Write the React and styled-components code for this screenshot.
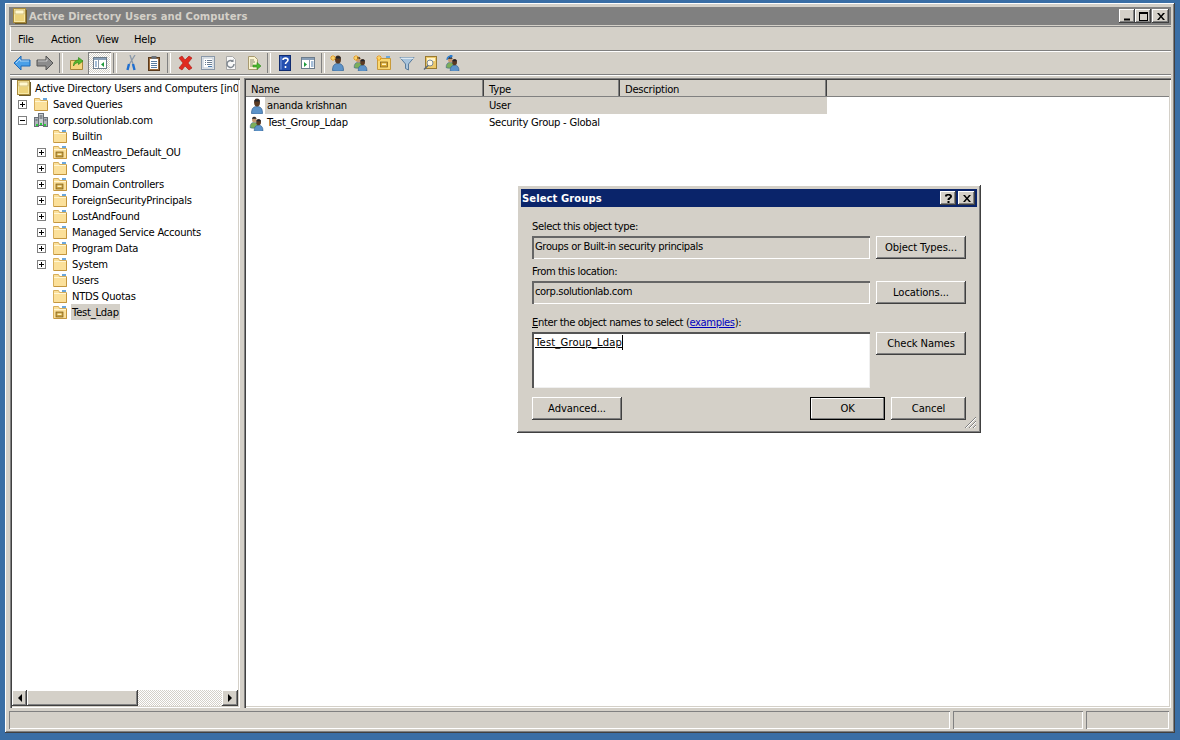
import React from 'react';
import styled, { createGlobalStyle } from 'styled-components';

const Global = createGlobalStyle`
  html, body { margin: 0; padding: 0; width: 1180px; height: 740px; overflow: hidden; background: #3a6ea5; }
  * { box-sizing: border-box; }
  body { font-family: "DejaVu Sans", "Liberation Sans", sans-serif; font-size: 10px; color: #000; letter-spacing: -0.25px; }
`;

const FACE = '#d4d0c8';
const raised = `box-shadow: inset -1px -1px #404040, inset 1px 1px #fff, inset -2px -2px #808080, inset 2px 2px ${FACE};`;
const sunken = `box-shadow: inset 1px 1px #808080, inset 2px 2px #404040, inset -1px -1px #fff, inset -2px -2px ${FACE};`;

const Desktop = styled.div`
  position: relative; width: 1180px; height: 740px; padding: 3px 5px 7px 5px; display: flex;
`;
const AppWindow = styled.div`
  flex: 1; display: flex; flex-direction: column; background: ${FACE};
  padding: 4px 4px 4px 4px; ${raised}
`;
const TitleBar = styled.div`
  height: 18px; flex: none; display: flex; align-items: center; background: #808080;
  padding: 0 2px 0 3px; color: ${FACE}; font-weight: bold;
`;
const TitleText = styled.span`
  margin-left: 1px; flex: 1; font-size: 10px; letter-spacing: 0.08px;
`;
const CaptionBtn = styled.div`
  width: ${p => p.$w || 16}px; height: 14px; background: ${FACE}; ${raised}
  margin-left: ${p => p.$gap || 0}px; display: flex; align-items: center; justify-content: center;
  font-size: 11px;
`;
const MenuBar = styled.div`
  flex: none; height: 25px; margin: 1px 0 0 1px; display: flex; align-items: center; padding: 1px 0 0 7px;
  border-top: 1px solid #808080; border-left: 1px solid #fff; box-shadow: inset 0 -1px #808080;
`;
const MenuItem = styled.span`
  width: ${p => p.$w}px;
`;
const ToolBar = styled.div`
  flex: none; height: 24px; margin-left: 1px; display: flex; align-items: center;
  border-top: 1px solid #fff; border-bottom: 1px solid #808080; box-shadow: 0 1px #fff;
`;
const ToolBtn = styled.div`
  width: 23px; height: 22px; flex: none; display: flex; align-items: center; justify-content: center;
  ${p => p.$on && `background: repeating-conic-gradient(#fff 0 25%, ${FACE} 0 50%) 0 0/2px 2px;
    box-shadow: inset 1px 1px #808080, inset -1px -1px #fff;`}
`;
const ToolSep = styled.div`
  width: ${p => p.$w || 9}px; height: 20px; flex: none; position: relative;
  &::after { content: ''; display: block; width: 2px; height: 20px; margin: 0 auto;
    border-left: 1px solid #808080; border-right: 1px solid #fff; }
`;
const Panes = styled.div`
  flex: 1; min-height: 0; margin: 3px 0 3px 1px; display: flex; gap: 4px;
`;
const TreePane = styled.div`
  width: 230px; flex: none; background: #fff; ${sunken} padding: 2px; display: flex; flex-direction: column;
`;
const TreeScroll = styled.div`
  flex: 1; min-height: 0; overflow: hidden;
`;
const Row = styled.div`
  height: 16px; display: flex; align-items: center; white-space: nowrap; position: relative;
  padding-left: ${p => p.$indent}px;
`;
const Expander = styled.span`
  width: 9px; height: 9px; flex: none; border: 1px solid #808080; background: #fff; position: relative;
  margin-right: 6px;
  &::before { content: ''; position: absolute; left: 1px; top: 3px; width: 5px; height: 1px; background: #000; }
  ${p => p.$plus && `&::after { content: ''; position: absolute; left: 3px; top: 1px; width: 1px; height: 5px; background: #000; }`}
`;
const NoExpander = styled.span`
  width: 15px; flex: none;
`;
const RowLabel = styled.span`
  margin-left: ${p => p.$gap ?? 3}px; padding: 0 1px; line-height: 18px; height: 16px;
  background: ${p => (p.$sel ? FACE : 'transparent')};
`;
const HScroll = styled.div`
  flex: none; height: 16px; display: flex; background: repeating-conic-gradient(#fff 0 25%, ${FACE} 0 50%) 0 0/2px 2px;
`;
const ScrollBtn = styled.div`
  width: ${p => p.$w || 16}px; height: 16px; background: ${FACE}; ${raised} display: flex; align-items: center; justify-content: center;
`;
const Thumb = styled.div`
  width: 111px; height: 16px; background: ${FACE}; ${raised}
`;
const Track = styled.div`
  flex: 1;
`;
const ListPane = styled.div`
  flex: 1; background: #fff; ${sunken} padding: 2px; min-width: 0;
`;
const Header = styled.div`
  height: 16px; background: ${FACE}; display: flex; box-shadow: 0 1px #808080;
`;
const HeadCell = styled.div`
  width: ${p => p.$w}px; flex: none; padding-left: ${p => p.$pad || 5}px; line-height: 16px; padding-top: 1px;
  box-shadow: inset -1px 0 #404040, inset -2px 0 #808080; line-height: 17px;
`;
const ListRow = styled.div`
  height: 17px; width: 581px; display: flex; align-items: center;
  margin-top: ${p => (p.$first ? 1 : 0)}px;
`;
const IconCell = styled.div`
  width: 19px; height: 17px; flex: none; padding-left: 3px; display: flex; align-items: center; background: #fff;
`;
const ListBody = styled.div`
  flex: 1; display: flex; height: 17px; align-items: center; background: ${p => (p.$sel ? FACE : '#fff')};
`;
const ListCell = styled.div`
  width: ${p => p.$w}px; flex: none; padding-left: ${p => p.$pad || 0}px; white-space: nowrap; line-height: 18px;
`;
const StatusBar = styled.div`
  flex: none; height: 18px; display: flex; gap: 3px; padding-right: 2px;
`;
const StatusCell = styled.div`
  width: ${p => p.$w}px; flex: ${p => (p.$grow ? 1 : 'none')}; height: 18px;
  box-shadow: inset 1px 1px #808080, inset -1px -1px #fff;
`;

const Dialog = styled.div`
  position: absolute; left: 517px; top: 185px; width: 464px; height: 248px; background: ${FACE};
  padding: 4px; ${raised} display: flex; flex-direction: column; letter-spacing: -0.38px;
`;
const DlgTitle = styled.div`
  height: 18px; flex: none; background: #0a246a; color: #fff; font-weight: bold; display: flex; align-items: center;
  padding: 0 2px 0 1px;
`;
const DlgTitleText = styled.span`
  flex: 1; font-size: 10px; letter-spacing: 0.08px;
`;
const DlgBody = styled.div`
  flex: 1; display: grid; grid-template-columns: 338px 90px; column-gap: 6px; padding: 11px 11px 0 11px;
  grid-template-rows: 18px 23px 22px 23px 28px 56px 9px 23px; align-content: start;
`;
const Label = styled.label`
  grid-column: 1 / 2; display: block; line-height: 16px; align-self: ${p => p.$align || 'start'};
  margin-bottom: ${p => p.$mb || 0}px;
`;
const Underlined = styled.span`text-decoration: underline;`;
const Link = styled.a`color: #0000c0; text-decoration: underline;`;
const ReadField = styled.div`
  background: ${FACE}; padding: 0 3px; line-height: 22px;
  box-shadow: inset 2px 2px #666, inset -1px -1px #fff; padding-left: 3px;
`;
const NameBox = styled.div`
  background: #fff; padding: 3px 3px; box-shadow: inset 2px 2px #555, inset -1px -1px #f0f0f0;
  display: flex; align-items: flex-start; line-height: 13px;
`;
const Resolved = styled.span`
  text-decoration: underline; padding-top: 1px; border-right: 1px solid #000; height: 15px; letter-spacing: 0.17px;
`;
const Btn = styled.div`
  background: ${FACE}; height: 23px; display: flex; align-items: center; justify-content: center;
  padding-bottom: 1px; letter-spacing: -0.1px; ${raised}
  ${p => p.$def && `box-shadow: inset 0 0 0 1px #000, inset -2px -2px #808080, inset 2px 2px #fff;`}
  width: ${p => p.$w ? p.$w + 'px' : 'auto'};
`;
const BottomRow = styled.div`
  grid-column: 1 / 3; grid-row: 8; display: flex; align-items: center; gap: 6px;
`;
const Spacer = styled.div`flex: 1;`;
const Grip = styled.svg`
  position: absolute; right: 4px; bottom: 4px;
`;

/* icons */
const S = ({ children, w = 16, h = 16 }) => (
  <svg width={w} height={h} viewBox={`0 0 ${w} ${h}`} style={{ flex: 'none', display: 'block' }}>{children}</svg>
);
const Folder = ({ ou }) => (
  <S>
    <path d="M1.500 2.500h5l1 2h7v10h-13z" fill="#fbe09a" stroke="#d6ae5c" />
    <path d="M2 5.500h12" stroke="#fff6d4" />
    <rect x="10" y="2" width="4" height="2" fill="#6aa6dc" />
    <path d="M14.500 5v9.500H2" fill="none" stroke="#c4963e" />
    {ou && <><rect x="4" y="8" width="7" height="5" fill="#c8a040" stroke="#7a5a1a" strokeWidth=".7" /><rect x="5.500" y="9.500" width="4" height="1.500" fill="#fff3c0" /></>}
  </S>
);
const AppIcon = () => (
  <S>
    <rect x="1.500" y="0.500" width="12" height="14" fill="#f6e8a6" stroke="#a88a3a" />
    <rect x="3" y="2" width="9" height="4" fill="#fff8d0" stroke="#b89a4a" strokeWidth=".6" />
    <path d="M14.500 2v13.500H3" stroke="#6a5a2a" fill="none" />
    <rect x="3" y="7" width="9" height="6" fill="#ecd27a" />
  </S>
);
const DomainIcon = () => (
  <S>
    <rect x="5.500" y="1.500" width="5" height="12" fill="#c8ccd0" stroke="#6a7078" />
    <rect x="1.500" y="5.500" width="4" height="9" fill="#aeb4ba" stroke="#6a7078" />
    <rect x="10.500" y="5.500" width="4" height="9" fill="#aeb4ba" stroke="#6a7078" />
    <path d="M6.500 4h3M6.500 6h3M2.500 8h2M11.500 8h2" stroke="#4a5058" />
    <rect x="3" y="12" width="2" height="2" fill="#2ecc40" /><rect x="7" y="11" width="2" height="2" fill="#2ecc40" /><rect x="11" y="12" width="2" height="2" fill="#2ecc40" />
  </S>
);
const Person = ({ x = 0, y = 0, body = '#5d93c8', skin = '#5a3a22', s = 1 }) => (
  <g transform={`translate(${x} ${y}) scale(${s})`}>
    <path d="M1.500 15.500c0-4.500 1.500-7 5.500-7s5.500 2.500 5.500 7c-2 1-9 1-11 0z" fill={body} stroke="#2f5c8c" strokeWidth=".7" />
    <ellipse cx="7" cy="4.500" rx="3" ry="4" fill={skin} />
    <path d="M4 3.500c.5-3 5.500-3 6 0z" fill="#20242c" />
  </g>
);
const Star = () => (
  <g stroke="#f0a018" strokeWidth="1">
    <path d="M3 0v6M0 3h6M1 1l4 4M5 1L1 5" />
    <circle cx="3" cy="3" r="1.200" fill="#ffd860" stroke="none" />
  </g>
);
const UserIcon = ({ star }) => (
  <S><Person x={1} y={0} />{star && <Star />}</S>
);
const GroupIcon = ({ star, arrow }) => (
  <S>
    <Person x={0} y={1} s={0.75} body="#7cae5a" skin="#c89a70" />
    <Person x={4} y={3.500} s={0.8} />
    {star && <Star />}
    {arrow && <path d="M2 5c0-3 2-4 5-4m-2-1l2 1-2 1.500" fill="none" stroke="#2a7cd0" strokeWidth="1.300" />}
  </S>
);
const Arrow = ({ dir, fill, stroke }) => (
  <S w={18} h={16}>
    <path d={dir === 'l' ? 'M1 8l7-7v4h9v6H8v4z' : 'M17 8l-7-7v4H1v6h9v4z'} fill={fill} stroke={stroke} strokeLinejoin="round" />
    <path d={dir === 'l' ? 'M3 8l4-4V6h9' : 'M2 6h9V3.500'} fill="none" stroke="#fff" strokeOpacity=".55" />
  </S>
);
const UpIcon = () => (
  <S>
    <path d="M1.500 5.500h12v9h-12z" fill="#f6d57e" stroke="#a98638" />
    <path d="M4.500 11c0-4 2-6 5-6V2.500l4.500 3.500-4.500 3.500V7.500c-2 0-4 1.500-5 3.500z" fill="#5ab82e" stroke="#2f8a1a" strokeWidth=".7" />
  </S>
);
const TreeToggle = () => (
  <S>
    <rect x="1.500" y="2.500" width="13" height="11" fill="#fff" stroke="#6c7c8c" />
    <rect x="2" y="3" width="12" height="2" fill="#8aa0b8" />
    <path d="M6.500 5v8" stroke="#8a9aa8" />
    <path d="M3 7h2M3 9h2M3 11h2" stroke="#4a7cb0" />
    <path d="M12 7v5l-3-2.500z" fill="#1e9a3c" />
  </S>
);
const ViewIcon = () => (
  <S>
    <rect x="1.500" y="2.500" width="13" height="11" fill="#fff" stroke="#6c7c8c" />
    <rect x="2" y="3" width="12" height="2" fill="#8aa0b8" />
    <path d="M9.500 5v8" stroke="#8a9aa8" />
    <path d="M11 7h2.500M11 9h2.500M11 11h2.500" stroke="#4a7cb0" />
    <path d="M4 7v5l3-2.500z" fill="#1e9a3c" />
  </S>
);
const CutIcon = () => (
  <S>
    <path d="M12 0L6.500 9M7 0l3 9" stroke="#8a98a8" strokeWidth="1.300" />
    <path d="M6 9L4.500 15M10 9l1.500 6" stroke="#1f6fd0" strokeWidth="2.400" />
  </S>
);
const PasteIcon = () => (
  <S>
    <rect x="2.500" y="2.500" width="11" height="13" fill="#9a6a3c" stroke="#5a3a1c" />
    <rect x="4" y="4" width="8" height="10" fill="#fff" />
    <path d="M5 6.500h6M5 8.500h6M5 10.500h6M5 12.500h6" stroke="#5a7ca0" />
    <rect x="5.500" y="1" width="5" height="3" fill="#6a7078" />
  </S>
);
const DeleteIcon = () => (
  <S>
    <path d="M2 3l3-2 3 4 4-4 3 2-4 5 4 5-3 2-4-4-3 4-3-2 4-5z" fill="#e02a20" stroke="#a81810" strokeWidth=".6" />
  </S>
);
const PropsIcon = () => (
  <S>
    <rect x="1.500" y="1.500" width="13" height="13" fill="#f4f4f4" stroke="#8a98a8" />
    <rect x="3" y="3" width="10" height="10" fill="#fff" stroke="#b8c4d0" />
    <path d="M5 5.500h1M7 5.500h5M5 7.500h1M7 7.500h5M5 9.500h1M7 9.500h5" stroke="#6a7c90" />
    <rect x="8" y="11" width="4" height="1" fill="#4a7cb0" />
  </S>
);
const RefreshIcon = () => (
  <S>
    <path d="M3.500 1.500h6l3 3v10h-9z" fill="#f8f8f8" stroke="#a8a8a8" />
    <path d="M11 9a3.500 3.500 0 1 1-1-2.500" fill="none" stroke="#808890" strokeWidth="1.500" />
    <path d="M10.500 4v3h-3" fill="#808890" />
  </S>
);
const ExportIcon = () => (
  <S>
    <path d="M2.500 1.500h6l3 3v10h-9z" fill="#fbf4d0" stroke="#a89a70" />
    <path d="M4 5h4M4 7h5M4 9h3M4 11h3" stroke="#8a8a70" />
    <path d="M7 10h4V7.500l4 3.500-4 3.500V12H7z" fill="#4ab82e" stroke="#2f8a1a" strokeWidth=".6" />
  </S>
);
const HelpIcon = () => (
  <S>
    <rect x="2.500" y="0.500" width="11" height="15" fill="#2450b0" stroke="#102c70" />
    <path d="M3.500 1.500h1v13h-1z" fill="#7a9ce0" />
    <path d="M6 5c0-2.500 5-2.500 5 0 0 2-2.500 2-2.500 4M8.500 11v2" fill="none" stroke="#fff" strokeWidth="1.600" />
  </S>
);
const FilterIcon = () => (
  <S>
    <path d="M1 2.500h14L9.500 9v6l-3-1.500V9z" fill="#a8c4dc" stroke="#5a7c9c" />
    <path d="M1.500 2.500h13v1.500h-13z" fill="#dbe8f2" />
  </S>
);
const FindIcon = () => (
  <S>
    <rect x="3.500" y="1.500" width="11" height="12" fill="#edc96a" stroke="#9a7a30" />
    <rect x="5" y="3" width="8" height="3" fill="#fff4c8" />
    <circle cx="8" cy="8" r="3" fill="#fff8e4" stroke="#7a8a9a" />
    <path d="M6 10.500L2 14.500" stroke="#5a6a7a" strokeWidth="1.500" />
  </S>
);
const NewOuIcon = () => (
  <S>
    <path d="M1.500 3.500h13v11h-13z" fill="#fbd870" stroke="#c89a3a" />
    <rect x="4.500" y="7" width="7" height="5" fill="#d8a830" stroke="#7a5a1a" strokeWidth=".7" />
    <rect x="6" y="8.500" width="4" height="1.500" fill="#fff3c0" />
    <rect x="10" y="1" width="4" height="2" fill="#6aa6dc" />
    <Star />
  </S>
);
const LeftTri = () => <svg width="4" height="8" viewBox="0 0 4 8" style={{ display: 'block' }}><path d="M4 0v8L0 4z" /></svg>;
const RightTri = () => <svg width="4" height="8" viewBox="0 0 4 8" style={{ display: 'block' }}><path d="M0 0v8l4-4z" /></svg>;
const MinG = () => <svg width="8" height="9" viewBox="0 0 8 9"><rect x="1" y="6.500" width="6" height="2" /></svg>;
const MaxG = () => <svg width="9" height="9" viewBox="0 0 9 9"><path d="M0 0h9v9H0zM1 2v6h7V2z" fillRule="evenodd" /></svg>;
const CloseG = () => <svg width="8" height="7" viewBox="0 0 8 7"><path d="M0 0h2l2 2.500L6 0h2L5 3.500 8 7H6L4 4.500 2 7H0l3-3.500z" /></svg>;
const HelpG = () => <svg width="7" height="9" viewBox="0 0 7 9"><path d="M0 2.500C0 0 1.500 0 3.500 0S7 .5 7 2.500 5 4 4.500 6H2.500C2.500 3.500 5 3.500 5 2.500S2 1 2 2.500zM2.500 7h2v2h-2z" /></svg>;

const tools = [
  <ToolBtn key="b"><Arrow dir="l" fill="#4aa0e8" stroke="#1f6ab8" /></ToolBtn>,
  <ToolBtn key="f"><Arrow dir="r" fill="#8c8c8c" stroke="#555" /></ToolBtn>,
  <ToolSep key="s1" />,
  <ToolBtn key="u"><UpIcon /></ToolBtn>,
  <ToolBtn key="t" $on><TreeToggle /></ToolBtn>,
  <ToolSep key="s2" $w={8} />,
  <ToolBtn key="c"><CutIcon /></ToolBtn>,
  <ToolBtn key="p"><PasteIcon /></ToolBtn>,
  <ToolSep key="s3" $w={8} />,
  <ToolBtn key="d"><DeleteIcon /></ToolBtn>,
  <ToolBtn key="pr"><PropsIcon /></ToolBtn>,
  <ToolBtn key="r"><RefreshIcon /></ToolBtn>,
  <ToolBtn key="e"><ExportIcon /></ToolBtn>,
  <ToolSep key="s4" $w={8} />,
  <ToolBtn key="h"><HelpIcon /></ToolBtn>,
  <ToolBtn key="v"><ViewIcon /></ToolBtn>,
  <ToolSep key="s5" $w={7} />,
  <ToolBtn key="nu"><UserIcon star /></ToolBtn>,
  <ToolBtn key="ng"><GroupIcon star /></ToolBtn>,
  <ToolBtn key="no"><NewOuIcon /></ToolBtn>,
  <ToolBtn key="fi"><FilterIcon /></ToolBtn>,
  <ToolBtn key="fd"><FindIcon /></ToolBtn>,
  <ToolBtn key="ag"><GroupIcon arrow /></ToolBtn>,
];

const children = [
  ['Builtin', false, false],
  ['cnMeastro_Default_OU', true, true],
  ['Computers', true, false],
  ['Domain Controllers', true, true],
  ['ForeignSecurityPrincipals', true, false],
  ['LostAndFound', true, false],
  ['Managed Service Accounts', true, false],
  ['Program Data', true, false],
  ['System', true, false],
  ['Users', false, false],
  ['NTDS Quotas', false, false],
];

export default function App() {
  return (
    <Desktop>
      <Global />
      <AppWindow>
        <TitleBar>
          <AppIcon />
          <TitleText>Active Directory Users and Computers</TitleText>
          <CaptionBtn><MinG /></CaptionBtn>
          <CaptionBtn><MaxG /></CaptionBtn>
          <CaptionBtn $gap={1} $w={17}><CloseG /></CaptionBtn>
        </TitleBar>
        <MenuBar>
          <MenuItem $w={33}>File</MenuItem>
          <MenuItem $w={45}>Action</MenuItem>
          <MenuItem $w={38}>View</MenuItem>
          <MenuItem $w={40}>Help</MenuItem>
        </MenuBar>
        <ToolBar>{tools}</ToolBar>
        <Panes>
          <TreePane>
            <TreeScroll>
              <Row $indent={4}>
                <AppIcon />
                <RowLabel $gap={2}>Active Directory Users and Computers [in0</RowLabel>
              </Row>
              <Row $indent={6}>
                <Expander $plus />
                <Folder />
                <RowLabel>Saved Queries</RowLabel>
              </Row>
              <Row $indent={6}>
                <Expander />
                <DomainIcon />
                <RowLabel>corp.solutionlab.com</RowLabel>
              </Row>
              {children.map(([name, plus, ou]) => (
                <Row key={name} $indent={25}>
                  {plus ? <Expander $plus /> : <NoExpander />}
                  <Folder ou={ou} />
                  <RowLabel>{name}</RowLabel>
                </Row>
              ))}
              <Row $indent={25}>
                <NoExpander />
                <Folder ou />
                <RowLabel $sel>Test_Ldap</RowLabel>
              </Row>
            </TreeScroll>
            <HScroll>
              <ScrollBtn $w={15}><LeftTri /></ScrollBtn>
              <Thumb />
              <Track />
              <ScrollBtn><RightTri /></ScrollBtn>
            </HScroll>
          </TreePane>
          <ListPane>
            <Header>
              <HeadCell $w={238}>Name</HeadCell>
              <HeadCell $w={136}>Type</HeadCell>
              <HeadCell $w={207}>Description</HeadCell>
            </Header>
            <ListRow $first>
              <IconCell><UserIcon /></IconCell>
              <ListBody $sel>
                <ListCell $w={224} $pad={2}>ananda krishnan</ListCell>
                <ListCell $w={136}>User</ListCell>
              </ListBody>
            </ListRow>
            <ListRow>
              <IconCell><GroupIcon /></IconCell>
              <ListBody>
                <ListCell $w={224} $pad={2}>Test_Group_Ldap</ListCell>
                <ListCell $w={136}>Security Group - Global</ListCell>
              </ListBody>
            </ListRow>
          </ListPane>
        </Panes>
        <StatusBar>
          <StatusCell $grow />
          <StatusCell $w={130} />
          <StatusCell $w={83} />
        </StatusBar>
      </AppWindow>

      <Dialog>
        <DlgTitle>
          <DlgTitleText>Select Groups</DlgTitleText>
          <CaptionBtn $w={16}><HelpG /></CaptionBtn>
          <CaptionBtn $w={17} $gap={2}><CloseG /></CaptionBtn>
        </DlgTitle>
        <DlgBody>
          <Label $align="center">Select this object type:</Label>
          <div />
          <ReadField>Groups or Built-in security principals</ReadField>
          <Btn>Object Types...</Btn>
          <Label $align="end" $mb={1}>From this location:</Label>
          <div />
          <ReadField>corp.solutionlab.com</ReadField>
          <Btn>Locations...</Btn>
          <Label $align="end" $mb={1}><Underlined>E</Underlined>nter the object names to select (<Link>examples</Link>):</Label>
          <div />
          <NameBox><Resolved>Test_Group_Ldap</Resolved></NameBox>
          <Btn>Check Names</Btn>
          <BottomRow>
            <Btn $w={90}>Advanced...</Btn>
            <Spacer />
            <Btn $w={75} $def>OK</Btn>
            <Btn $w={75}>Cancel</Btn>
          </BottomRow>
        </DlgBody>
        <Grip width="13" height="13" viewBox="0 0 13 13">
          <path d="M12 1L1 12M12 5L5 12M12 9L9 12" stroke="#808080" strokeWidth="1" fill="none" />
          <path d="M12 2L2 12M12 6L6 12M12 10L10 12" stroke="#fff" strokeWidth="1" fill="none" />
        </Grip>
      </Dialog>
    </Desktop>
  );
}
